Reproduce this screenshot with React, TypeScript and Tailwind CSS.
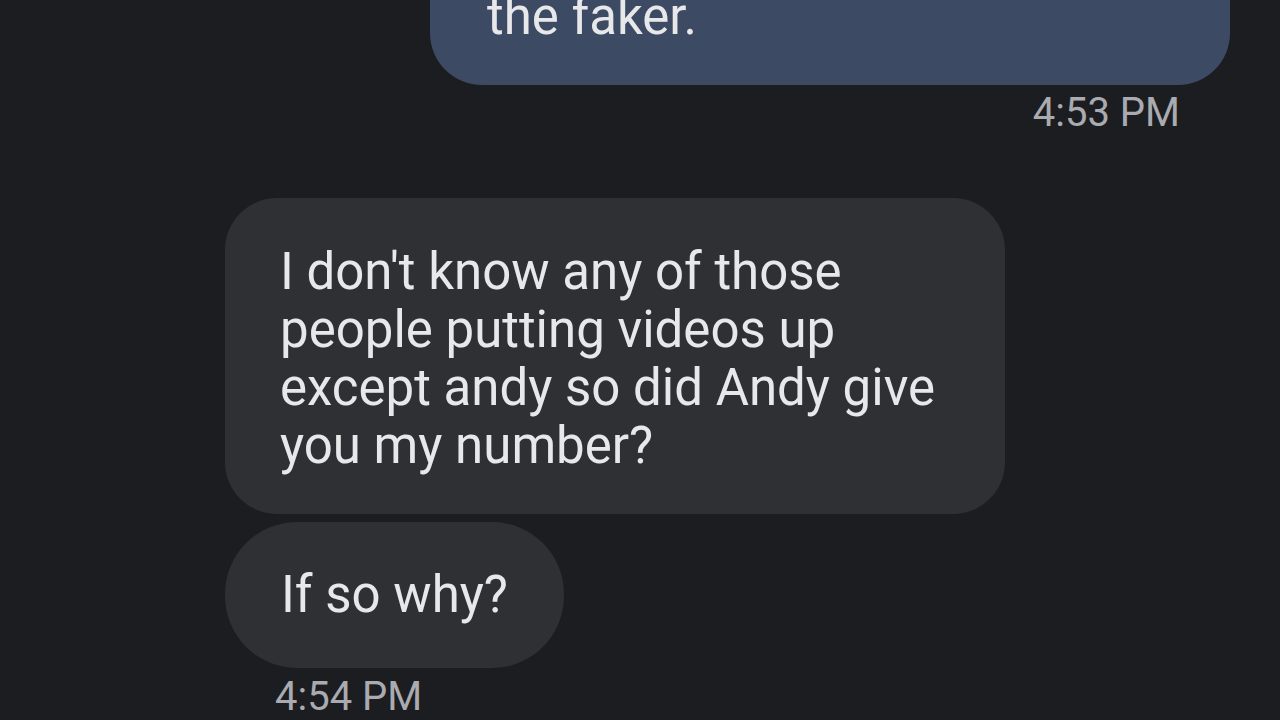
import React from "react"

const font = { fontFamily: "Roboto, 'Noto Sans', sans-serif" }

export default function App() {
  return (
    <div
      className="w-[1280px] h-[720px] overflow-hidden bg-[#1c1d20] text-[#e8e8ea] flex flex-col"
      style={font}
    >
      {/* sent: cut off at the top */}
      <div className="ml-[430px] w-[800px] -mt-[72px] rounded-[52px] bg-[#3d4a64] pl-[57px] pr-[50px] pt-[60px] pb-[39px] text-[51px] leading-[58px]">
        the faker.
      </div>
      <div className="self-end mr-[100px] mt-[6px] text-[40px] leading-[44px] text-[#a9abb0]">4:53 PM</div>

      {/* received */}
      <div className="ml-[225px] mt-[63px] w-[780px] rounded-[52px] bg-[#2e3034] pl-[55px] pt-[45px] pb-[39px] text-[51px] leading-[58px]">
        <div>I don't know any of those</div>
        <div>people putting videos up</div>
        <div>except andy so did Andy give</div>
        <div>you my number?</div>
      </div>
      <div className="ml-[225px] mt-[8px] self-start rounded-[72px] bg-[#2e3034] px-[56px] py-[44px] text-[51px] leading-[58px]">
        If so why?
      </div>
      <div className="ml-[275px] mt-[7px] text-[40px] leading-[44px] text-[#a9abb0]">4:54 PM</div>
    </div>
  )
}
